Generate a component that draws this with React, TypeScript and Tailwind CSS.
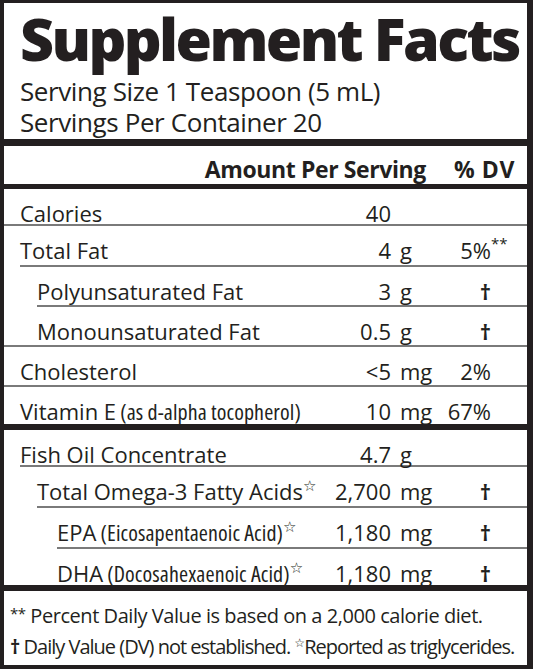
import React from 'react';

type RowData = {
  label: string;
  paren?: string;
  star?: boolean;
  num?: string;
  unit?: string;
  dv?: string;
  dvSup?: string;
  indent: 0 | 1 | 2;
  h: string;
  line?: 'full' | 'indent' | 'none';
};

const indentPad = ['pl-[16px]', 'pl-[33px]', 'pl-[53px]'];
const lineIndent = ['ml-[16px]', 'ml-[33px]', 'ml-[53px]'];

const Star = () => (
  <span className="relative -top-[9px] text-[15px] leading-none font-['DejaVu_Sans',sans-serif]">☆</span>
);

const Row: React.FC<{ row: RowData }> = ({ row }) => (
  <>
    <div className={`grid grid-cols-[1fr_70px_46px_51px] items-center pr-[36px] pt-[8px] ${row.h}`}>
      <div className={`whitespace-nowrap ${indentPad[row.indent]}`}>
        {row.label}
        {row.paren && (
          <span className="text-[22px] tracking-[0.1px] [font-stretch:75%]"> {row.paren}</span>
        )}
        {row.star && <Star />}
      </div>
      <div className="text-right pr-[3px] whitespace-nowrap">{row.num}</div>
      <div className="pl-[6px]">{row.unit}</div>
      <div className="text-right">
        <span className={`relative ${row.dv === '†' ? 'font-bold' : ''}`}>
          {row.dv}
          {row.dvSup && (
            <span className="absolute left-full top-[1px] text-[15px] leading-none">{row.dvSup}</span>
          )}
        </span>
      </div>
    </div>
    {row.line === 'full' && <div className="h-[2px] bg-[#7a7a7a]" />}
    {row.line === 'indent' && <div className={`h-[2px] bg-[#7a7a7a] ${lineIndent[row.indent]}`} />}
  </>
);

const nutrients: RowData[] = [
  { label: 'Calories', num: '40', indent: 0, h: 'h-[35px]', line: 'full' },
  { label: 'Total Fat', num: '4', unit: 'g', dv: '5%', dvSup: '**', indent: 0, h: 'h-[39px]', line: 'indent' },
  { label: 'Polyunsaturated Fat', num: '3', unit: 'g', dv: '†', indent: 1, h: 'h-[38px]', line: 'indent' },
  { label: 'Monounsaturated Fat', num: '0.5', unit: 'g', dv: '†', indent: 1, h: 'h-[38px]', line: 'full' },
  { label: 'Cholesterol', num: '<5', unit: 'mg', dv: '2%', indent: 0, h: 'h-[38px]', line: 'full' },
  { label: 'Vitamin E', paren: '(as d-alpha tocopherol)', num: '10', unit: 'mg', dv: '67%', indent: 0, h: 'h-[37px]' },
];

const oils: RowData[] = [
  { label: 'Fish Oil Concentrate', num: '4.7', unit: 'g', indent: 0, h: 'h-[35px]', line: 'indent' },
  { label: 'Total Omega-3 Fatty Acids', star: true, num: '2,700', unit: 'mg', dv: '†', indent: 1, h: 'h-[39px]', line: 'indent' },
  { label: 'EPA', paren: '(Eicosapentaenoic Acid)', star: true, num: '1,180', unit: 'mg', dv: '†', indent: 2, h: 'h-[39px]', line: 'indent' },
  { label: 'DHA', paren: '(Docosahexaenoic Acid)', star: true, num: '1,180', unit: 'mg', dv: '†', indent: 2, h: 'h-[36px]' },
];

export default function App() {
  return (
    <div className="w-[533px] h-[669px] bg-[#231f20] pt-[3px] pl-[4px] pr-[6px] pb-[4px] flex flex-col text-[#231f20] font-['Open_Sans',sans-serif]">
      {/* Title block */}
      <div className="bg-white h-[142px] pl-[16px] pt-[4px]">
        <h1 className="text-[59px] font-extrabold leading-[62px] tracking-[-2.6px] whitespace-nowrap">Supplement Facts</h1>
        <div className="mt-[7px] text-[26px] leading-[31px] tracking-[-0.4px] whitespace-nowrap">
          <p>Serving Size 1 Teaspoon (5 mL)</p>
          <p>Servings Per Container 20</p>
        </div>
      </div>

      <div className="h-[7px]" />

      {/* Column heads */}
      <div className="bg-white h-[38px] flex items-center justify-end gap-[28px] pr-[12px] pt-[8px] text-[23px] font-bold tracking-[-0.4px]">
        <span>Amount Per Serving</span>
        <span className="tracking-[0.6px]">% DV</span>
      </div>

      <div className="h-[5px]" />

      <div className="bg-white text-[22px]">
        {nutrients.map((r) => (
          <Row key={r.label} row={r} />
        ))}
      </div>

      <div className="h-[7px]" />

      <div className="bg-white text-[22px]">
        {oils.map((r) => (
          <Row key={r.label} row={r} />
        ))}
      </div>

      <div className="h-[6px]" />

      {/* Footnotes */}
      <div className="bg-white flex-1 pl-[6px] pt-[10px] text-[20px] leading-[29px] whitespace-nowrap">
        <p className="tracking-[-0.45px]">
          <span className="relative -top-[4px] text-[15px]">**</span> Percent Daily Value is based on a 2,000 calorie diet.
        </p>
        <p className="tracking-[-1px]">
          <span className="font-bold">†</span> Daily Value (DV) not established.{' '}
          <span className="relative -top-[7px] text-[12px] font-['DejaVu_Sans',sans-serif]">☆</span>Reported as triglycerides.
        </p>
      </div>
    </div>
  );
}
